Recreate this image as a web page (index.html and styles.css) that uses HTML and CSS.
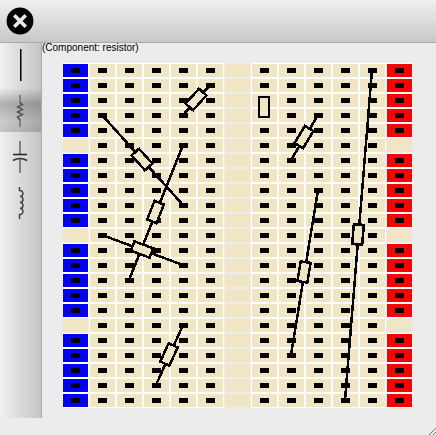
FILE: index.html
```html
<!DOCTYPE html>
<html lang="en">
<head>
<meta charset="utf-8">
<title>Breadboard</title>
<link rel="stylesheet" href="styles.css">
</head>
<body>
<header class="bar">
  <button class="close" type="button" aria-label="Close">
    <svg width="28" height="28" viewBox="0 0 28 28" aria-hidden="true">
      <circle cx="14" cy="14" r="13.4" fill="#000"/>
      <path d="M9.500 9.500L18.500 18.500M18.500 9.500L9.500 18.500" stroke="#e8e8e8" stroke-width="3.6" stroke-linecap="square"/>
    </svg>
  </button>
</header>
<div class="workspace">
  <nav class="tools" aria-label="Components">
    <button class="tool" type="button" aria-label="Wire">
      <svg width="32" height="32" viewBox="0 0 32 32" aria-hidden="true"><path d="M16.5 0V32" stroke="#000"/><path d="M17.5 0V32" stroke="#000" stroke-opacity=".5"/></svg>
    </button>
    <button class="tool selected" type="button" aria-label="Resistor">
      <svg width="32" height="32" viewBox="0 0 32 32" fill="none" aria-hidden="true"><path d="M16 0V8M16 24.500V32" stroke="#808080" stroke-width="2"/><path d="M16 7.500L18.500 9.500L13.500 12L18.500 14.500L13.500 17L18.500 19.500L13.500 22L16 25" stroke="#444" stroke-width="1.300"/></svg>
    </button>
    <button class="tool" type="button" aria-label="Capacitor">
      <svg width="32" height="32" viewBox="0 0 32 32" fill="none" aria-hidden="true"><path d="M16 0V13M16 18V32" stroke="#808080" stroke-width="2"/><path d="M9 13.500H23" stroke="#222" stroke-width="1.500"/><path d="M9 19.500Q16 15.500 23 19.500" stroke="#333" stroke-width="1.600"/></svg>
    </button>
    <button class="tool" type="button" aria-label="Inductor">
      <svg width="32" height="32" viewBox="0 0 32 32" fill="none" aria-hidden="true"><path d="M15.500 0V3.500C20 3 20 9.500 16 9.500C20 9 20 15.500 16 15.500C20 15 20 21.500 16 21.500C20 21 20 28 15.500 27.500V32" stroke="#444" stroke-width="1.500"/></svg>
    </button>
  </nav>
  <main class="canvas">
    <p class="status">(Component: resistor)</p>
    <div class="board" id="board"></div>
  </main>
</div>
<svg class="grip" width="7" height="7" viewBox="0 0 7 7" aria-hidden="true"><path d="M0 7L7 0M4 7L7 4" stroke="#777"/></svg>
<script src="board.js"></script>
</body>
</html>
```
FILE: styles.css
```css
* { box-sizing: border-box; }

body {
  margin: 0;
  background: #ececec;
  color: #000;
  font: 10px/10px "Liberation Sans", Arial, sans-serif;
}

button {
  border: 0;
  padding: 0;
  background: none;
}

.bar {
  display: flex;
  align-items: center;
  height: 43px;
  padding-left: 6px;
  background: linear-gradient(#efefef, #c8c8c8);
  border-bottom: 1px solid #aaa;
}

.close { display: flex; }

.workspace {
  display: flex;
  align-items: flex-start;
}

.tools {
  display: flex;
  flex-direction: column;
  gap: 3px;
  width: 42px;
  flex: none;
  padding-bottom: 194px;
  background: linear-gradient(90deg, #f0f0f0, #c4c4c4);
  border-right: 1px solid #aaa;
}

.tool {
  display: flex;
  padding: 6px 4px 5px;
}

.tool.selected {
  background: linear-gradient(rgba(0, 0, 0, 0.02), rgba(0, 0, 0, 0.26) 35%, rgba(0, 0, 0, 0.14) 75%, rgba(0, 0, 0, 0.18));
}

.canvas {
  flex: 1;
  min-width: 0;
}

.status { margin: 0; }

.board {
  position: relative;
  display: grid;
  grid-template-columns: repeat(13, 27px);
  grid-auto-rows: 15px;
  width: max-content;
  margin: 10px 20px 27px;
}

.cell {
  display: grid;
  place-items: center;
  background: #f0e6c4;
  border: 1px solid #fff;
}

.cell.minus { background: #00f; }
.cell.plus { background: #f00; }
.cell.blank { border-color: #ececec; }

.hole {
  width: 9px;
  height: 5px;
  background: #000;
}

.parts {
  position: absolute;
  inset: 0;
  width: 100%;
  height: 100%;
  fill: #f0e6c4;
  stroke: #000;
  stroke-width: 2;
  shape-rendering: crispEdges;
}

.mounted { stroke-width: 2.5px; }

.grip {
  position: fixed;
  right: 0;
  bottom: 0;
}
```
FILE: board.js
```javascript
const COLS = 13;
const ROWS = 23;
const board = document.getElementById('board');

for (let r = 0; r < ROWS; r++) {
  for (let c = 0; c < COLS; c++) {
    const rail = c === 0 || c === COLS - 1;
    const blank = c === 6 || (rail && r % 6 === 5);
    const cell = document.createElement('div');
    cell.className = 'cell' + (blank ? ' blank' : c === 0 ? ' minus' : rail ? ' plus' : '');
    if (!blank) {
      const hole = document.createElement('span');
      hole.className = 'hole';
      cell.append(hole);
    }
    board.append(cell);
  }
}

// Each resistor joins two holes: [column, row, column, row]
const resistors = [
  [5, 1, 4, 3],
  [4, 9, 1, 3],
  [4, 5, 2, 14],
  [1, 11, 4, 13],
  [9, 3, 8, 6],
  [9, 8, 8, 19],
  [11, 0, 10, 22],
  [4, 17, 3, 21]
];

const body = (x, y, angle) =>
  `<rect x="-5" y="-10" width="10" height="20" transform="translate(${x} ${y}) rotate(${angle})"/>`;

let shapes = body(202, 44, 0);
for (const [c1, r1, c2, r2] of resistors) {
  const x1 = c1 * 27 + 13, y1 = r1 * 15 + 7;
  const x2 = c2 * 27 + 13, y2 = r2 * 15 + 7;
  const angle = Math.atan2(y2 - y1, x2 - x1) * 180 / Math.PI - 90;
  shapes += `<g class="mounted"><line x1="${x1}" y1="${y1}" x2="${x2}" y2="${y2}"/>`;
  shapes += body((x1 + x2) / 2 - 0.5, (y1 + y2) / 2 - 0.5, angle) + '</g>';
}
board.insertAdjacentHTML('beforeend', `<svg class="parts" aria-hidden="true">${shapes}</svg>`);
```
